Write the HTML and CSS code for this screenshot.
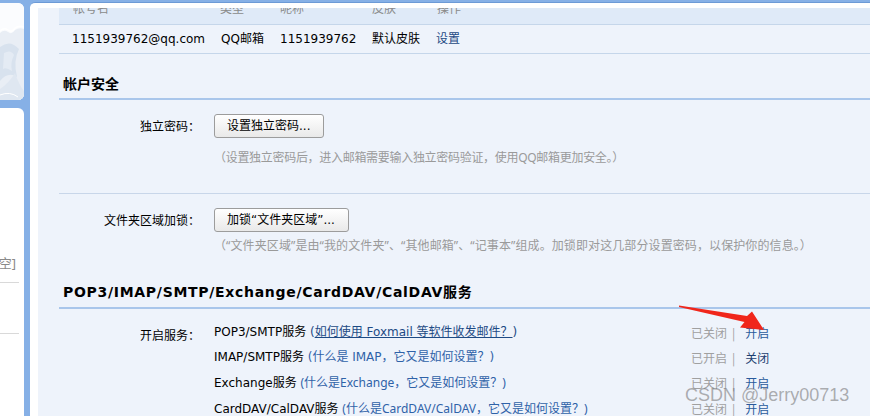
FILE: index.html
```html
<!DOCTYPE html>
<html lang="zh-CN">
<head>
<meta charset="utf-8">
<title>邮箱设置 - 帐户</title>
<link rel="stylesheet" href="styles.css">
</head>
<body>
<div class="page">
  <aside class="side">
    <div class="side-card side-top">
      <svg class="side-art" viewBox="0 0 24 97" width="24" height="97">
        <rect width="24" height="97" fill="#fbfcfe"/>
        <path d="M0 30 Q4 26 8 29 Q12 32 15 27 Q19 24 24 26 V97 H0Z" fill="#e9eef5"/>
        <path d="M0 28 Q4 24 8 27 Q12 30 15 25 Q19 22 24 24" fill="none" stroke="#ffffff" stroke-width="1.5"/>
        <path d="M0 44 Q10 36 19 46 Q13 58 17 74 Q8 68 0 78Z" fill="#d8e2ee"/>
        <path d="M4 50 Q11 46 14 52 Q10 60 12 68 Q6 64 3 66Z" fill="#e4ebf4"/>
        <path d="M0 86 Q9 80 15 70 Q19 82 24 88 V97 H0Z" fill="#dfe7f1"/>
        <path d="M0 92 Q10 88 18 94" fill="none" stroke="#ffffff" stroke-width="1"/>
      </svg>
    </div>
    <div class="side-card side-bottom">
      <div class="side-text">[空]</div>
      <div class="side-line side-line-1"></div>
      <div class="side-line side-line-2"></div>
    </div>
  </aside>

  <main class="frame">
    <div class="scroll">
      <div class="acc-head">
        <div class="acc-grid acc-head-inner">
          <span>帐号名</span><span>类型</span><span>昵称</span><span>皮肤</span><span>操作</span>
        </div>
      </div>
      <div class="acc-grid acc-row">
        <span>1151939762@qq.com</span><span>QQ邮箱</span><span>1151939762</span><span>默认皮肤</span><span class="link-dark">设置</span>
      </div>

      <h2 class="sec-title">帐户安全</h2>

      <div class="form-row form-row-line">
        <div class="label">独立密码：</div>
        <div class="field">
          <button class="btn btn-pwd" type="button">设置独立密码...</button>
          <p class="desc desc-1">（设置独立密码后，进入邮箱需要输入独立密码验证，使用QQ邮箱更加安全。）</p>
        </div>
      </div>

      <div class="form-row form-row-2">
        <div class="label">文件夹区域加锁：</div>
        <div class="field">
          <button class="btn btn-lock" type="button">加锁“文件夹区域”...</button>
          <p class="desc desc-2">（“文件夹区域”是由“我的文件夹”、“其他邮箱”、“记事本”组成。加锁即对这几部分设置密码，以保护你的信息。）</p>
        </div>
      </div>

      <h2 class="sec-title sec-title-en">POP3/IMAP/SMTP/Exchange/CardDAV/CalDAV服务</h2>

      <div class="form-row svc-row">
        <div class="label label-svc">开启服务：</div>
        <div class="svc-list">
          <div class="svc">
            <div class="svc-name">POP3/SMTP服务 <span class="paren">(</span><a class="help help-u" href="#">如何使用 Foxmail 等软件收发邮件？</a><span class="paren">)</span></div>
            <div class="svc-state"><span class="state">已关闭</span><span class="sep">|</span><a class="act" href="#">开启</a></div>
          </div>
          <div class="svc">
            <div class="svc-name">IMAP/SMTP服务 <span class="help">(什么是 IMAP，它又是如何设置？)</span></div>
            <div class="svc-state"><span class="state">已开启</span><span class="sep">|</span><a class="act act-dark" href="#">关闭</a></div>
          </div>
          <div class="svc">
            <div class="svc-name">Exchange服务 <span class="help help-ya">(什么是Exchange，它又是如何设置？)</span></div>
            <div class="svc-state"><span class="state">已关闭</span><span class="sep">|</span><a class="act" href="#">开启</a></div>
          </div>
          <div class="svc">
            <div class="svc-name">CardDAV/CalDAV服务 <span class="help help-ya">(什么是CardDAV/CalDAV，它又是如何设置？)</span></div>
            <div class="svc-state"><span class="state">已关闭</span><span class="sep">|</span><a class="act" href="#">开启</a></div>
          </div>
        </div>
      </div>
    </div>
  </main>
</div>

<svg class="arrow" width="870" height="416" viewBox="0 0 870 416">
  <polygon points="679,305.5 747,316 752,311.5 764,330 740,327.5 744.5,322 679,307" fill="#f0261b"/>
</svg>
<div class="watermark">CSDN @Jerry00713</div>
</body>
</html>
```

FILE: styles.css
```css
html, body {
  margin: 0;
  padding: 0;
}

body {
  width: 870px;
  height: 416px;
  overflow: hidden;
  position: relative;
  background: #86b0e6;
  font-family: "DejaVu Sans", "Noto Sans CJK SC", sans-serif;
  font-size: 12px;
  color: #000;
}

.page {
  display: flex;
  height: 416px;
  padding-top: 2px;
  box-sizing: border-box;
}

/* ---------- left column ---------- */
.side {
  width: 24px;
  flex: none;
  display: flex;
  flex-direction: column;
  gap: 8px;
  padding-top: 1px;
}

.side-card {
  background: #fff;
}

.side-top {
  height: 97px;
  border-radius: 0 6px 6px 0;
  overflow: hidden;
}

.side-art {
  display: block;
}

.side-bottom {
  flex: 1;
  border-radius: 0 6px 0 0;
  overflow: hidden;
  display: flex;
  flex-direction: column;
  align-items: flex-end;
}

.side-text {
  margin-top: 147px;
  width: 40px;
  padding-right: 8px;
  line-height: 16px;
  text-align: right;
  white-space: nowrap;
  color: #8a8a8a;
  font-family: "Noto Sans", "Noto Sans CJK SC", sans-serif;
  font-size: 13px;
  align-self: flex-end;
}

.side-line {
  align-self: flex-start;
  width: 19px;
  height: 1px;
  background: #d9d9d9;
}

.side-line-1 {
  margin-top: 11px;
}

.side-line-2 {
  margin-top: 50px;
}

/* ---------- main frame ---------- */
.frame {
  flex: 1;
  margin-left: 6px;
  background: #fff;
  border-top: 1px solid #6c9ad6;
  border-radius: 5px 0 0 0;
  padding: 5px 0 0 8px;
  display: flex;
  flex-direction: column;
  overflow: hidden;
}

.scroll {
  flex: 1;
  background: #eef3fb;
  padding-left: 21px;
  overflow: hidden;
}

/* account table */
.acc-grid {
  display: grid;
  grid-template-columns: 149px 59px 92px 64px 1fr;
  padding-left: 13px;
  white-space: nowrap;
}

.acc-head {
  height: 16px;
  background: #dfeaf8;
  border-bottom: 1px solid #c5d6ea;
  overflow: hidden;
}

.acc-head-inner {
  margin-top: -7px;
  line-height: 16px;
  color: #8a8a8a;
  padding-left: 14px;
  grid-template-columns: 147px 60px 92px 65px 1fr;
}

.acc-row {
  height: 28px;
  line-height: 29px;
  border-bottom: 1px solid #c5d6ea;
}

.link-dark {
  color: #1d4a84;
}

/* section titles */
.sec-title {
  margin: 0;
  padding: 20px 0 4px 4px;
  line-height: 20px;
  font-size: 14px;
  font-weight: bold;
  border-bottom: 2px solid #a9c6eb;
  white-space: nowrap;
}

.sec-title-en {
  letter-spacing: 0.7px;
  padding-top: 19px;
  padding-bottom: 5px;
}

/* form rows */
.form-row {
  display: flex;
  padding-top: 14px;
}

.form-row-line {
  padding-bottom: 25px;
  border-bottom: 1px solid #c8d6e9;
}

.form-row-2 {
  padding-bottom: 7px;
}

.label {
  width: 141px;
  flex: none;
  text-align: right;
  line-height: 24px;
  white-space: nowrap;
  font-family: "Noto Sans CJK SC", sans-serif;
}

.field {
  margin-left: 14px;
  display: flex;
  flex-direction: column;
  align-items: flex-start;
}

.btn {
  height: 24px;
  padding: 0 13px 0 12px;
  border: 1px solid #9c9c9c;
  border-radius: 3px;
  background: linear-gradient(#ffffff, #e9e9e9);
  font-family: "DejaVu Sans", "Noto Sans CJK SC", sans-serif;
  font-size: 12px;
  color: #000;
  line-height: 22px;
}

.desc {
  margin: 10px 0 0;
  line-height: 20px;
  color: #9a9a9a;
  white-space: nowrap;
  font-family: "Noto Sans", "Noto Sans CJK SC", sans-serif;
}

.desc-1 {
  letter-spacing: -0.3px;
}

.desc-2 {
  margin-top: 4px;
  letter-spacing: 0.1px;
}

/* services */
.svc-row {
  padding-top: 11px;
}

.label-svc {
  line-height: 25px;
  padding-top: 2px;
}

.svc-list {
  margin-left: 14px;
  display: flex;
  flex-direction: column;
}

.svc {
  display: flex;
  line-height: 25px;
  white-space: nowrap;
}

.svc-name {
  width: 477px;
  flex: none;
}

.paren {
  color: #1d4a84;
}

.help {
  color: #2f62a8;
  text-decoration: none;
  font-family: "DejaVu Sans", "Noto Sans CJK SC", sans-serif;
}

.help-u {
  color: #1d4a84;
  text-decoration: underline;
}

.help-ya {
  font-family: "Noto Sans", "Noto Sans CJK SC", sans-serif;
}

.svc-state {
  display: flex;
  font-family: "Noto Sans CJK SC", sans-serif;
}

.state {
  color: #a0a0a0;
}

.sep {
  color: #a0a0a0;
  margin: 0 10px 0 5px;
}

.act {
  color: #2a5a9c;
  text-decoration: none;
}

.act-dark {
  color: #1d3f70;
}

/* overlays */
.arrow {
  position: absolute;
  left: 0;
  top: 0;
  pointer-events: none;
}

.watermark {
  position: absolute;
  left: 685px;
  top: 384px;
  font-family: "Liberation Sans", Arial, sans-serif;
  font-size: 18px;
  line-height: 22px;
  color: rgba(110, 110, 110, 0.55);
  white-space: nowrap;
  pointer-events: none;
}
```
